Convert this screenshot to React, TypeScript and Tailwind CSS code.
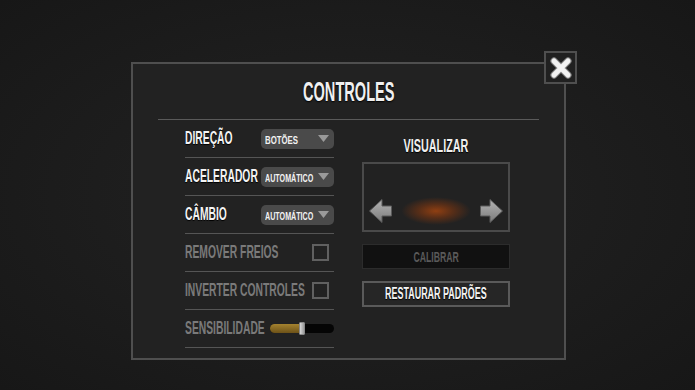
import type { ReactNode } from "react";

const font = {
  fontFamily: '"Liberation Sans", Arial, sans-serif',
};

function Cond({ children, className = "" }: { children: ReactNode; className?: string }) {
  return <span className={`inline-block whitespace-nowrap font-bold leading-none ${className}`}>{children}</span>;
}

function Select({ value, small }: { value: string; small?: boolean }) {
  return (
    <div className="flex h-[20px] w-[73px] shrink-0 items-center rounded-[5px] bg-[#4a4a4a] pl-[4px] pr-[5px]">
      <div className="w-[52px]">
        <Cond className={`origin-left text-[11px] text-[#f2f2f2] ${small ? "scale-x-[0.65]" : "scale-x-[0.71]"}`}>
          {value}
        </Cond>
      </div>
      <svg width="11" height="7" viewBox="0 0 11 7" className="ml-auto">
        <path d="M0 0 H11 L5.5 7 Z" fill="#9a9a9a" />
      </svg>
    </div>
  );
}

function Checkbox() {
  return <div className="mr-[5px] h-[17px] w-[17px] shrink-0 border-2 border-[#606060]" />;
}

function Slider() {
  return (
    <div className="relative h-[9px] w-[64px] shrink-0 rounded-full bg-[#050505]">
      <div className="h-full w-[32px] rounded-l-full bg-[linear-gradient(to_bottom,#a4822f,#6d5218)]" />
      <div className="absolute left-[29px] top-[-2px] h-[13px] w-[6px] rounded-[1px] border border-[#888] bg-[linear-gradient(to_right,#d8d8d8,#9a9a9a)]" />
    </div>
  );
}

function Row({ label, disabled, children }: { label: string; disabled?: boolean; children: ReactNode }) {
  return (
    <div className="flex h-[38px] items-center justify-between border-b border-[#555555]">
      <div className="min-w-0 flex-1">
        <Cond
          className={`origin-left scale-x-[0.59] text-[17.5px] ${disabled ? "text-[#7a7a7a]" : "text-[#f4f4f4] [text-shadow:0_1px_1px_#000]"}`}
        >
          {label}
        </Cond>
      </div>
      {children}
    </div>
  );
}

function Arrow({ flip }: { flip?: boolean }) {
  return (
    <svg width="23" height="24" viewBox="0 0 23 24" className={flip ? "-scale-x-100" : ""}>
      <defs>
        <linearGradient id="ag" x1="0" y1="0" x2="0" y2="1">
          <stop offset="0" stopColor="#b4b4b4" />
          <stop offset="1" stopColor="#7a7a7a" />
        </linearGradient>
      </defs>
      <path d="M0.5 12 L13 0.5 V7 H22.5 V17 H13 V23.5 Z" fill="url(#ag)" stroke="#5a5a5a" strokeWidth="1" />
    </svg>
  );
}

export default function App() {
  return (
    <div
      className="h-[390px] w-[695px] overflow-hidden bg-[radial-gradient(ellipse_at_center,#232323_0%,#1c1c1c_60%,#171717_100%)] pl-[131px] pt-[62px]"
      style={font}
    >
      <div className="relative h-[298px] w-[435px] border-2 border-[#4f4f4f] bg-[#222222] px-[25px]">
        <button className="absolute left-[411px] top-[-13px] flex h-[33px] w-[33px] items-center justify-center border-2 border-[#4f4f4f] bg-[#202020]">
          <svg width="22" height="22" viewBox="0 0 22 22">
            <path d="M4 4 L18 18 M18 4 L4 18" stroke="#8a8a8a" strokeWidth="7" strokeLinecap="round" />
            <path d="M4 4 L18 18 M18 4 L4 18" stroke="#f2f2f2" strokeWidth="5" strokeLinecap="round" />
          </svg>
        </button>

        <div className="flex h-[56px] items-center justify-center border-b border-[#5a5a5a] pt-[2px]">
          <Cond className="scale-x-[0.54] text-[27px] text-[#f0f0f0] [text-shadow:0_1px_2px_#000]">CONTROLES</Cond>
        </div>

        <div className="flex">
          <div className="ml-[27px] flex w-[149px] flex-col">
            <Row label="DIREÇÃO">
              <Select value="BOTÕES" />
            </Row>
            <Row label="ACELERADOR">
              <Select value="AUTOMÁTICO" small />
            </Row>
            <Row label="CÂMBIO">
              <Select value="AUTOMÁTICO" small />
            </Row>
            <Row label="REMOVER FREIOS" disabled>
              <Checkbox />
            </Row>
            <Row label="INVERTER CONTROLES" disabled>
              <Checkbox />
            </Row>
            <Row label="SENSIBILIDADE" disabled>
              <Slider />
            </Row>
          </div>

          <div className="ml-[28px] flex w-[148px] flex-col items-center pt-[16px]">
            <div className="flex h-[20px] items-center">
              <Cond className="scale-x-[0.6] text-[18px] text-[#f0f0f0] [text-shadow:0_1px_1px_#000]">VISUALIZAR</Cond>
            </div>
            <div className="mt-[6px] flex h-[70px] w-[148px] items-end justify-between border-2 border-[#4a4a4a] px-[5px] pb-[7px]">
              <Arrow />
              <div className="mb-[-2px] h-[28px] w-[70px] bg-[radial-gradient(ellipse_at_center,#8f3f12_0%,rgba(130,55,15,0.55)_35%,rgba(34,34,34,0)_70%)]" />
              <Arrow flip />
            </div>
            <div className="mt-[12px] flex h-[25px] w-[148px] items-center justify-center border border-[#2c2c2c] bg-[#111111]">
              <Cond className="scale-x-[0.58] text-[15px] text-[#5a5a5a]">CALIBRAR</Cond>
            </div>
            <div className="mt-[12px] flex h-[26px] w-[148px] items-center justify-center border-2 border-[#5a5a5a] bg-[#262626]">
              <Cond className="scale-x-[0.56] text-[16px] text-[#f4f4f4] [text-shadow:0_1px_1px_#000]">RESTAURAR PADRÕES</Cond>
            </div>
          </div>
        </div>
      </div>
    </div>
  );
}
